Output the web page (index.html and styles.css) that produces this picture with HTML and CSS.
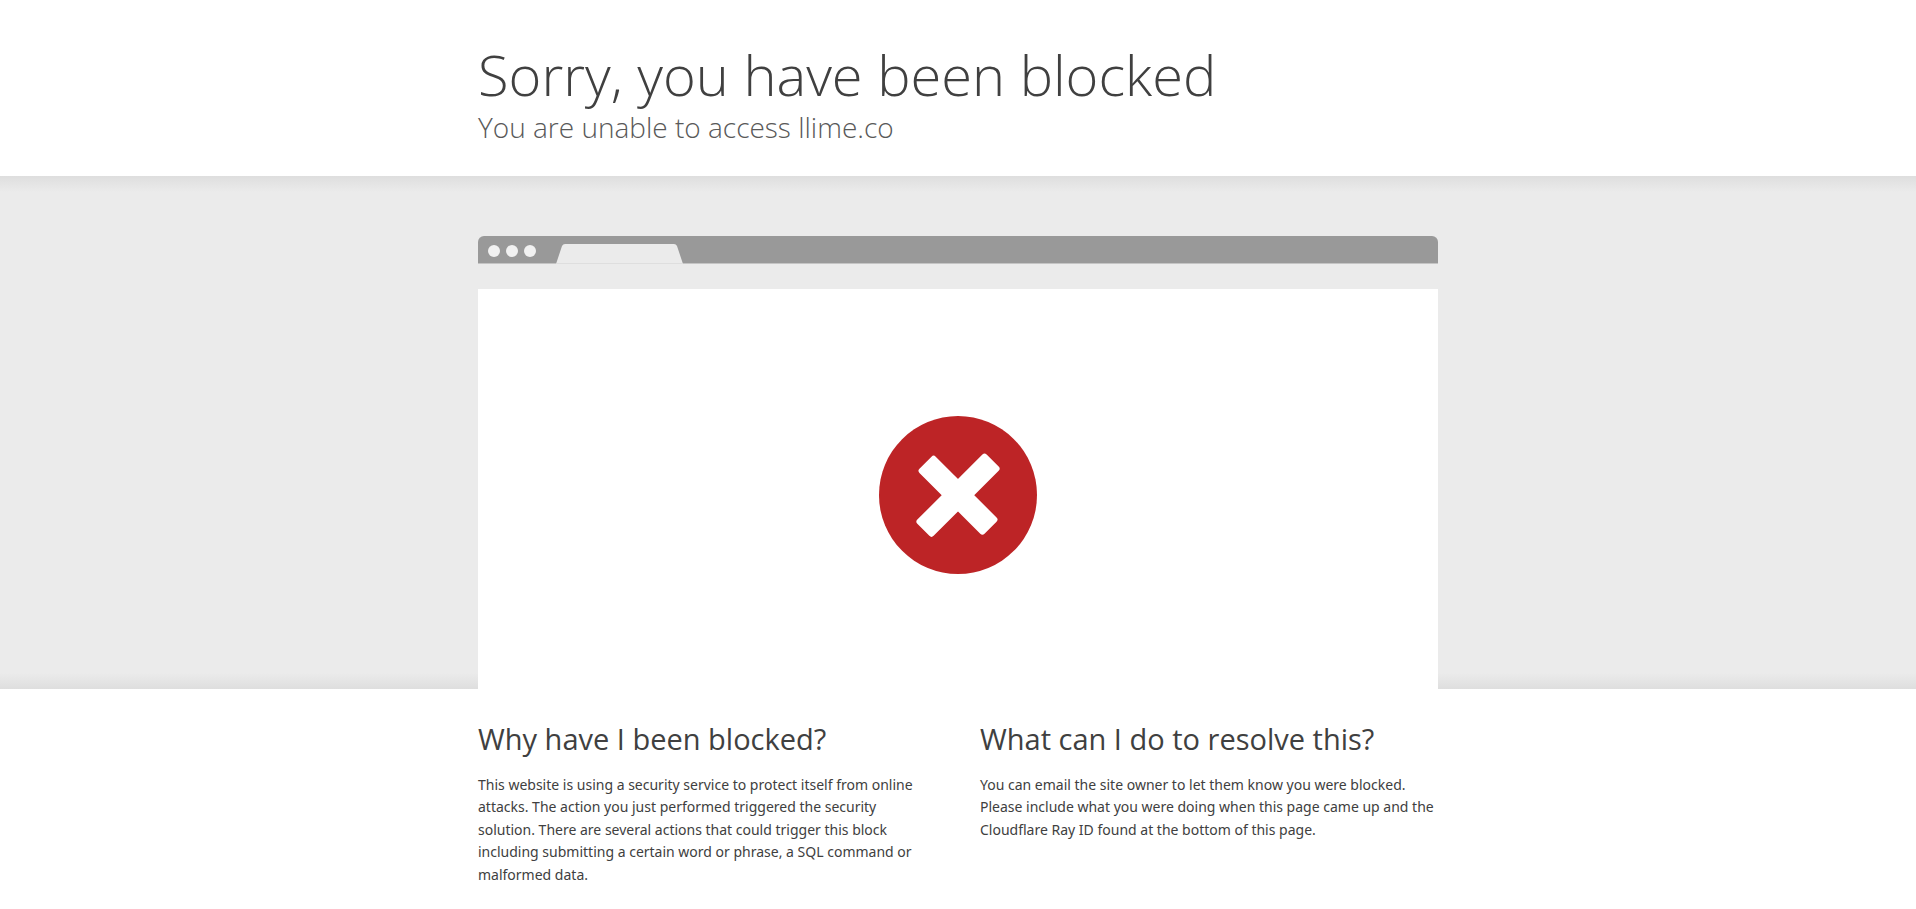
FILE: index.html
```
<!DOCTYPE html>
<html lang="en">
<head>
<meta charset="utf-8">
<meta name="viewport" content="width=device-width, initial-scale=1">
<title>Sorry, you have been blocked</title>
<link rel="stylesheet" href="styles.css">
</head>
<body>
<header class="wrapper header">
  <h1 class="title">Sorry, you have been blocked</h1>
  <h2 class="subtitle">You are unable to access llime.co</h2>
</header>

<section class="highlight">
  <div class="wrapper">
    <div class="browser-bar">
      <span class="dot"></span>
      <span class="dot"></span>
      <span class="dot"></span>
      <svg class="tab" width="127" height="20" viewBox="0 0 127 20" aria-hidden="true">
        <path d="M0 20 L6 2 Q7 0 9 0 H118 Q120 0 121 2 L127 20 Z" fill="#ebebeb"/>
        <path d="M0 19.5 H127" stroke="#dedede"/>
      </svg>
    </div>
    <div class="browser-page">
      <svg width="158" height="158" viewBox="0 0 158 158" role="img" aria-label="Blocked">
        <circle cx="79" cy="79" r="79" fill="#bd2426"/>
        <g fill="#fff" transform="translate(79 79.2)">
          <rect x="-46" y="-11.5" width="92" height="23" rx="3" transform="rotate(45)"/>
          <rect x="-49" y="-11.5" width="98" height="23" rx="3" transform="rotate(-45)"/>
        </g>
      </svg>
    </div>
  </div>
</section>

<main class="wrapper columns">
  <section>
    <h2 class="question">Why have I been blocked?</h2>
    <p class="answer">This website is using a security service to protect itself from online attacks. The action you just performed triggered the security solution. There are several actions that could trigger this block including submitting a certain word or phrase, a SQL command or malformed data.</p>
  </section>
  <section>
    <h2 class="question">What can I do to resolve this?</h2>
    <p class="answer">You can email the site owner to let them know you were blocked. Please include what you were doing when this page came up and the Cloudflare Ray ID found at the bottom of this page.</p>
  </section>
</main>
</body>
</html>
```
FILE: styles.css
```
* {
  box-sizing: border-box;
}

body {
  margin: 0;
  background: #fff;
  color: #404040;
  font-family: "Open Sans", "Noto Sans", sans-serif;
  font-size: 14px;
  line-height: 1.6;
}

h1,
h2,
p {
  margin: 0;
}

.wrapper {
  max-width: 960px;
  margin: 0 auto;
}

.header {
  padding: 38px 0 32px;
}

.title {
  font-size: 56px;
  font-weight: 300;
  line-height: 72px;
}

.subtitle {
  color: #595959;
  font-size: 28px;
  font-weight: 300;
  line-height: 34px;
}

.highlight {
  padding-top: 60px;
  background:
    linear-gradient(to bottom, #dedede, #ebebeb) top / 100% 16px no-repeat,
    linear-gradient(to top, #dedede, #ebebeb) bottom / 100% 16px no-repeat,
    #ebebeb;
}

.browser-bar {
  display: flex;
  align-items: center;
  gap: 6px;
  height: 28px;
  padding: 0 10px;
  border-bottom: 1px solid #c4c4c4;
  border-radius: 6px 6px 0 0;
  background: #999;
}

.dot {
  width: 12px;
  height: 12px;
  margin-top: 2px;
  border-radius: 50%;
  background: #f1f1f1;
}

.tab {
  align-self: flex-end;
  margin-left: 14px;
  margin-bottom: -1px;
}

.browser-page {
  display: flex;
  justify-content: center;
  margin-top: 25px;
  padding: 127px 0 115px;
  background: #fff;
}

.columns {
  display: grid;
  grid-template-columns: repeat(auto-fit, minmax(320px, 1fr));
  gap: 32px 44px;
  padding: 32px 0 24px;
}

.question {
  margin-bottom: 17px;
  font-size: 29px;
  font-weight: 400;
  line-height: 36px;
}

.answer {
  font-family: "Noto Sans", "Open Sans", sans-serif;
}
```
